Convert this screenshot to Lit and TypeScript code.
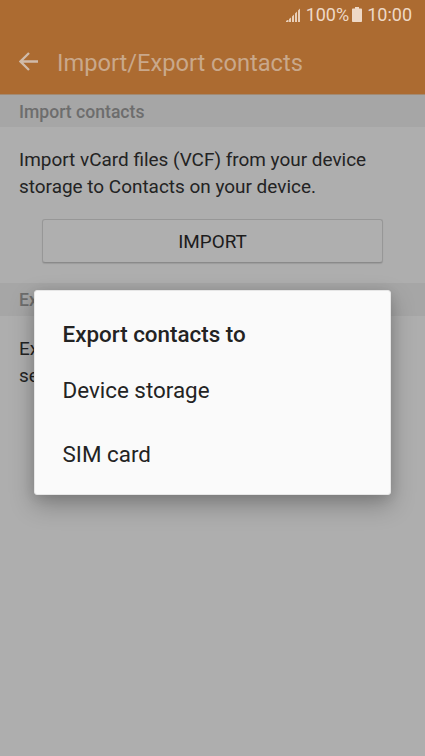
import { LitElement, html, css } from "lit";
import { customElement } from "lit/decorators.js";

@customElement("status-bar")
class StatusBar extends LitElement {
  static styles = css`
    :host { display: flex; justify-content: flex-end; align-items: center; height: 30px; padding-right: 13px; color: #eed9c7; font-size: 18px; line-height: 30px; }
    .signal { width: 15px; height: 15px; margin-right: 5px; }
    .battery { width: 10px; height: 15px; margin: 0 5px 2px 3px; }
  `;
  render() {
    return html`
      <svg class="signal" viewBox="0 0 15 15" fill="#e9cfb9">
        <path d="M0 14V13L1.5 12H2.5V14ZM3 11L5 9.5V14H3ZM6 8.5L8 6.5V14H6ZM9 5.5L11 3.5V14H9ZM12 2.5L14 .5V14H12Z"></path>
      </svg>
      <span>100%</span>
      <svg class="battery" viewBox="0 0 10 15" fill="#eed9c7">
        <path d="M3 0H7V1.6H9.2Q10 1.6 10 2.4V14.2Q10 15 9.2 15H.8Q0 15 0 14.2V2.4Q0 1.6 .8 1.6H3Z"></path>
      </svg>
      <span>10:00</span>
    `;
  }
}

@customElement("app-root")
class AppRoot extends LitElement {
  static styles = css`
    :host { display: block; position: relative; height: 756px; overflow: hidden; background: #aeaeae; font-family: Roboto, "Noto Sans", sans-serif; color: #232323; }
    .header { height: 94px; background: #ac6b31; border-bottom: 1px solid #a38a72; }
    .bar { display: flex; align-items: center; height: 64px; padding-left: 19px; }
    .back { width: 19px; height: 19px; margin: 0 19px 1px 0; }
    .title { font-size: 23.65px; line-height: 64px; padding-top: 1px; color: #c9a88b; white-space: nowrap; }
    .section { height: 33px; box-sizing: border-box; padding-left: 19px; background: #a6a6a6; color: #6d6d6d; font-size: 17.6px; line-height: 35px; font-weight: 500; }
    .section.first { height: 32px; line-height: 34px; }
    .text { margin: 0; padding: 19px 0 0 19px; font-size: 18.95px; line-height: 27px; white-space: nowrap; }
    .import { display: block; box-sizing: border-box; width: 341px; height: 44px; margin: 19px 0 20px 42px; padding: 2px 0 0; border: 1px solid #979797; border-bottom-color: #8a8a8a; border-radius: 3px; background: #afafaf; box-shadow: 0 1px 1px #9c9c9c; font: 18.9px/40px Roboto, sans-serif; color: #1c1c1c; }
    .dialog { position: absolute; left: 34px; top: 290px; width: 357px; height: 205px; box-sizing: border-box; padding: 20px 27.5px; background: #fafafa; border: 1px solid #e6e6e6; border-radius: 3px; box-shadow: 0 10px 24px rgba(0,0,0,.27), 0 2px 12px rgba(0,0,0,.1); }
    .heading { margin: 0; font-size: 22.4px; line-height: 47px; font-weight: 500; white-space: nowrap; }
    .option { font-size: 22.4px; line-height: 64px; height: 64px; white-space: nowrap; }
  `;
  render() {
    return html`
      <div class="header">
        <status-bar></status-bar>
        <div class="bar">
          <svg class="back" viewBox="0 0 19 19" fill="none" stroke="#d0bbaa" stroke-width="2.3"><path d="M19 9.5H1.8M10 1L1.5 9.5L10 18"></path></svg>
          <span class="title">Import/Export contacts</span>
        </div>
      </div>
      <div class="section first">Import contacts</div>
      <p class="text">Import vCard files (VCF) from your device<br />storage to Contacts on your device.</p>
      <button class="import">IMPORT</button>
      <div class="section">Ex</div>
      <p class="text">Ex<br />se</p>
      <div class="dialog" role="dialog">
        <h2 class="heading">Export contacts to</h2>
        <div class="option">Device storage</div>
        <div class="option">SIM card</div>
      </div>
    `;
  }
}
